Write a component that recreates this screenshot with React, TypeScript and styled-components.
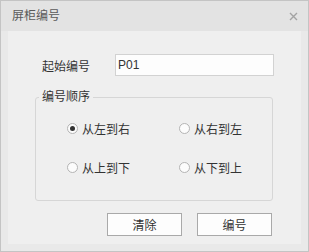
import styled, { createGlobalStyle } from 'styled-components';

const GlobalStyle = createGlobalStyle`
    html, body {
        margin: 0;
        padding: 0;
        background: #ffffff;
    }
    * {
        box-sizing: border-box;
    }
`;

const FONT = `"Liberation Sans", "Noto Sans CJK SC", sans-serif`;

const orders = [
    { key: 'lr', label: '从左到右' },
    { key: 'rl', label: '从右到左' },
    { key: 'tb', label: '从上到下' },
    { key: 'bt', label: '从下到上' },
];

export default function App() {
    const selected = 'lr';

    return (
        <>
            <GlobalStyle />
            <Dialog>
                <TitleBar>
                    <Title>屏柜编号</Title>
                    <CloseButton aria-label="close">
                        <svg width="9" height="9" viewBox="0 0 9 9">
                            <path d="M1 1 L8 8 M8 1 L1 8" stroke="#a3a3a3" strokeWidth="1.4" />
                        </svg>
                    </CloseButton>
                </TitleBar>
                <Body>
                    <Panel>
                        <FieldRow>
                            <Label>起始编号</Label>
                            <TextInput defaultValue="P01" />
                        </FieldRow>
                        <Group>
                            <Legend>编号顺序</Legend>
                            <RadioGrid>
                                {orders.map((o) => (
                                    <RadioItem key={o.key}>
                                        <RadioCircle $checked={o.key === selected} />
                                        <RadioText>{o.label}</RadioText>
                                    </RadioItem>
                                ))}
                            </RadioGrid>
                        </Group>
                        <Actions>
                            <Button>清除</Button>
                            <Button>编号</Button>
                        </Actions>
                    </Panel>
                </Body>
            </Dialog>
        </>
    );
}

const Dialog = styled.div`
    width: 309px;
    height: 252px;
    border: 1px solid #c4c4c4;
    background: #e9e9e9;
    display: flex;
    flex-direction: column;
    font-family: ${FONT};
`;

const TitleBar = styled.div`
    height: 30px;
    flex-shrink: 0;
    background: #e3e3e3;
    display: flex;
    align-items: center;
    justify-content: space-between;
    padding: 0 10px 0 11px;
`;

const Title = styled.span`
    font-size: 12px;
    color: #5a5a5a;
    line-height: 14px;
`;

const CloseButton = styled.span`
    display: flex;
    align-items: center;
    width: 9px;
    height: 9px;
`;

const Body = styled.div`
    flex: 1;
    padding: 0 7px 7px 7px;
    display: flex;
`;

const Panel = styled.div`
    flex: 1;
    background: #efefef;
    padding: 23px 0 0 27px;
    display: flex;
    flex-direction: column;
`;

const FieldRow = styled.div`
    display: flex;
    align-items: center;
    height: 22px;
    padding-left: 7px;
`;

const Label = styled.span`
    width: 73px;
    font-size: 12px;
    color: #333333;
`;

const TextInput = styled.input`
    width: 159px;
    height: 22px;
    border: 1px solid #d2d2d2;
    background: #fdfdfd;
    padding: 0 2px;
    font-family: ${FONT};
    font-size: 12px;
    color: #333333;
    outline: none;
`;

const Group = styled.fieldset`
    margin: 13px 0 0 0;
    width: 238px;
    min-inline-size: 0;
    border: 1px solid #d6d6d6;
    border-radius: 3px;
    padding: 13px 0 23px 0;
`;

const Legend = styled.legend`
    margin-left: 3px;
    padding: 0 3px;
    font-size: 12px;
    line-height: 16px;
    color: #333333;
`;

const RadioGrid = styled.div`
    display: grid;
    grid-template-columns: 112px 1fr;
    row-gap: 19px;
    padding-left: 31px;
`;

const RadioItem = styled.label`
    display: flex;
    align-items: center;
    height: 20px;
    gap: 4px;
`;

const RadioCircle = styled.span<{ $checked: boolean }>`
    width: 11px;
    height: 11px;
    border-radius: 50%;
    border: 1px solid #b4b4b4;
    background: #fcfcfc;
    display: flex;
    align-items: center;
    justify-content: center;
    &::after {
        content: '';
        width: 5px;
        height: 5px;
        border-radius: 50%;
        background: ${(p) => (p.$checked ? '#333333' : 'transparent')};
    }
`;

const RadioText = styled.span`
    font-size: 12px;
    color: #333333;
`;

const Actions = styled.div`
    display: flex;
    gap: 15px;
    margin-top: 12px;
    padding-left: 72px;
`;

const Button = styled.button`
    width: 75px;
    height: 23px;
    border: 1px solid #a9a9a9;
    background: #fdfdfd;
    font-family: ${FONT};
    font-size: 12px;
    color: #333333;
    padding: 0;
`;
